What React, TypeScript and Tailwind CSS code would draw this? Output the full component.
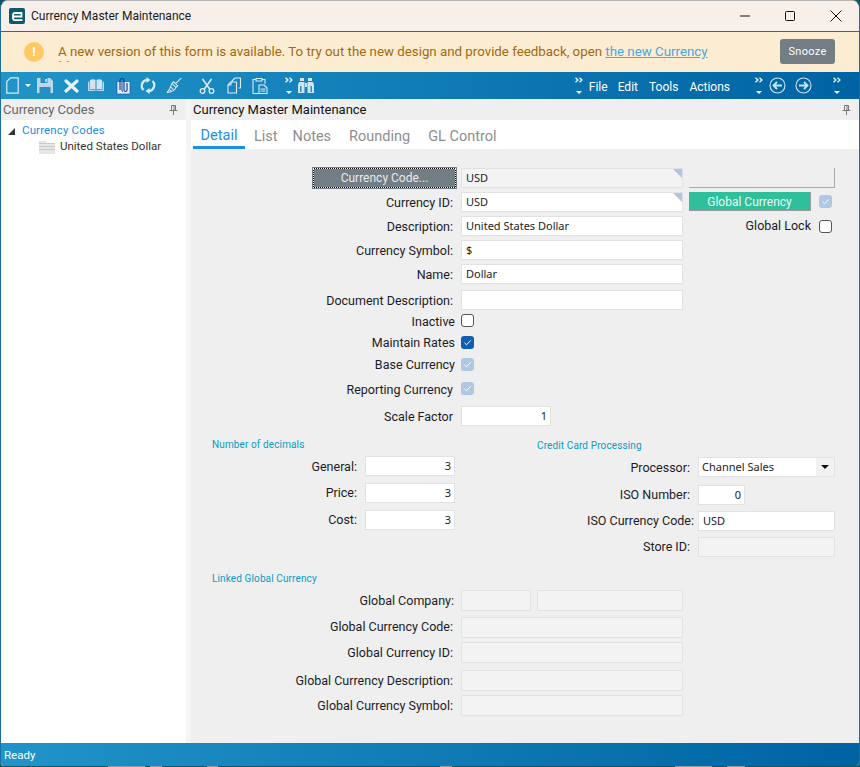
import React from "react";

const grad = "bg-gradient-to-r from-[#2094c8] to-[#0063a3]";

function Field({ w = "w-[222px]", h = "h-[20px]", v = "", right = false, disabled = false, corner = false, children }: { w?: string; h?: string; v?: string; right?: boolean; disabled?: boolean; corner?: boolean; children?: React.ReactNode }) {
  return (
    <div className={`relative ${w} ${h} shrink-0 border border-[#e2e2e2] ${disabled ? "bg-[#f3f3f3]" : "bg-white"} flex items-center pl-1 text-[11px] text-[#222] font-['Noto_Sans',sans-serif] ${right ? "justify-end pr-[3px]" : ""}`}>
      {v}
      {children}
      {corner && <span className="absolute top-0 right-0 w-0 h-0 border-t-[9px] border-l-[9px] border-t-[#b0c6e0] border-l-transparent" />}
    </div>
  );
}

function Check({ state }: { state: "off" | "on" | "dis" }) {
  if (state === "off") return <span className="block w-[13px] h-[13px] rounded-[3px] border border-[#555] bg-white shrink-0" />;
  return (
    <span className={`flex items-center justify-center w-[13px] h-[13px] shrink-0 rounded-[3px] ${state === "on" ? "bg-[#0f5fb5]" : "bg-[#b0c8e4]"}`}>
      <svg width="9" height="9" viewBox="0 0 9 9" fill="none" stroke="#fff" strokeWidth="1"><path d="M1.500 4.800 3.600 6.800 7.600 2.400" /></svg>
    </span>
  );
}

function Row({ label, mt = "", children, lw = "w-[262px]", h = "h-[20px]", gap = "w-2", lp = "" }: { label: string; mt?: string; children: React.ReactNode; lw?: string; h?: string; gap?: string; lp?: string }) {
  return (
    <div className={`flex items-center ${h} ${mt}`}>
      <span className={`${lw} ${lp} shrink-0 text-right text-[12.5px] text-[#1c1c28] whitespace-nowrap`}>{label}</span>
      <span className={`${gap} shrink-0`} />
      {children}
    </div>
  );
}

function Pin() {
  return (
    <svg width="9" height="10" viewBox="0 0 9 10" fill="none" stroke="#777" strokeWidth="1">
      <path d="M2.500 .5h4v5h-4zM.5 5.500h8M4.500 5.500v4.500M5 1v4" />
    </svg>
  );
}

function Chevrons({ className = "" }: { className?: string }) {
  return (
    <span className={`flex flex-col items-center justify-between h-[17px] w-2.5 shrink-0 ${className}`}>
      <svg width="8" height="6" viewBox="0 0 8 6" fill="none" stroke="#fff" strokeWidth="1.200"><path d="M.5 .7 3 3 .5 5.300M4.500 .7 7 3 4.500 5.300" /></svg>
      <svg width="6" height="3" viewBox="0 0 6 3" fill="#fff"><path d="M0 0h6L3 3z" /></svg>
    </span>
  );
}

function Tool({ children, w = "w-4", mr = "mr-[10px]" }: { children: React.ReactNode; w?: string; mr?: string }) {
  return <span className={`${w} ${mr} h-5 flex items-center justify-center shrink-0`}>{children}</span>;
}

const ic = { fill: "none", stroke: "#dcebf4", strokeWidth: 1.200, strokeLinejoin: "round" as const, strokeLinecap: "round" as const };

function Toolbar() {
  return (
    <div className={`h-[27px] shrink-0 flex items-center ${grad} text-white text-[12px]`}>
      <div className="flex items-center pl-[4px]">
        <Tool w="w-3.5" mr="mr-1.5">
          <svg width="13" height="17" viewBox="0 0 13 17" {...ic}><path d="M4.500 .8h7.700v15.400H.8V4.500z" /></svg>
        </Tool>
        <svg width="6" height="3" viewBox="0 0 6 3" fill="#fff" className="mr-[6px]"><path d="M0 0h6L3 3z" /></svg>
        <Tool mr="mr-[10px]">
          <svg width="16" height="15" viewBox="0 0 16 15"><path fill="#b9d8ea" d="M0 0h13l3 3v12H0z" /><path fill="#2b8ec2" d="M3.500 0h7v5h-7zM2.500 9h11v6h-11z" /><path fill="#b9d8ea" d="M8 1h2v3H8z" /></svg>
        </Tool>
        <Tool mr="mr-[9px]">
          <svg width="15" height="14" viewBox="0 0 15 14" stroke="#e8f2f8" strokeWidth="3.200" strokeLinecap="round"><path d="M2 2l11 10M13 2 2 12" /></svg>
        </Tool>
        <Tool mr="mr-[11px]">
          <svg width="16" height="13" viewBox="0 0 16 13"><path fill="#b9d8ea" d="M0 3 1.500 2v9h6v1H0zM16 3l-1.500-1v9h-6v1H16z" /><path fill="#cfe4f1" d="M2 1c2-1 4-1 5.500 0v9.500C6 10 4 10 2 10.500zM14 1c-2-1-4-1-5.500 0v9.500C10 10 12 10 14 10.500z" /></svg>
        </Tool>
        <Tool mr="mr-[9px]">
          <svg width="15" height="18" viewBox="0 0 15 18"><path fill="#dfeef8" stroke="#1b3fa0" strokeWidth=".6" d="M1 4.500h13v12.500H1z" /><path fill="none" stroke="#1b3fa0" strokeWidth="1.200" d="M4 13V3.500a2 2 0 0 1 4 0V13a1.500 1.500 0 0 0 3 0V6" /><path fill="none" stroke="#1b3fa0" strokeWidth="1" d="M6 5v8.500a1 1 0 0 0 1 1" /></svg>
        </Tool>
        <Tool mr="mr-[10px]">
          <svg width="16" height="17" viewBox="0 0 16 17" fill="none" stroke="#dcebf4" strokeWidth="2.200"><path d="M3.500 13A6 6 0 0 1 7 2.800M12.500 4a6 6 0 0 1-3.500 10.200" /><path fill="#dcebf4" stroke="none" d="M6.500 0v6L10.500 3zM9.500 17v-6L5.500 14z" /></svg>
        </Tool>
        <Tool mr="mr-[17px]">
          <svg width="17" height="17" viewBox="0 0 17 17" {...ic} strokeWidth={1.100}><path d="M16 1 10 6.500M8 4.500l4.500 4.500-1.500 1c-1.500 3-5 5.500-10 6C3 14 5 10 6.500 6zM5 10l2.500 2.500M3.500 13l1.500 1M7 7l3 3" /></svg>
        </Tool>
        <Tool mr="mr-[11px]">
          <svg width="16" height="16" viewBox="0 0 16 16" fill="none" stroke="#dcebf4" strokeWidth="1.300"><circle cx="3.500" cy="13" r="2.300" /><circle cx="12.500" cy="13" r="2.300" /><path d="M5 11.500 12.500 1M11 11.500 3.500 1" strokeWidth="1.600" /></svg>
        </Tool>
        <Tool mr="mr-[10px]">
          <svg width="15" height="17" viewBox="0 0 15 17" {...ic} strokeWidth={1.100}><path d="M5 4 8 1h5.500v10H12M4 5h5.500v11H1V8z" /><path d="M4 5v3H1" /></svg>
        </Tool>
        <Tool mr="mr-4">
          <svg width="16" height="17" viewBox="0 0 16 17" {...ic} strokeWidth={1.100}><path d="M4 2.500H1v14h6M10 2.500h3v4M4 1.500h6v2.500H4zM7 8h5l3 3v5.500H7z" /><path d="M9 12h4M9 14h4" /></svg>
        </Tool>
        <Chevrons className="mr-1" />
        <Tool mr="mr-0">
          <svg width="16" height="15" viewBox="0 0 16 15"><path fill="#cfe4f1" d="M2 0h4v3H2zM10 0h4v3h-4zM1 4h5.500v11H0V7zM15 4H9.500v11H16V7zM7 5h2v4H7z" /><path fill="#2b8ec2" d="M2 8h1.500v6H2zM12.500 8H14v6h-1.500z" /></svg>
        </Tool>
      </div>
      <div className="flex-1" />
      <Chevrons className="mr-[5px]" />
      <span className="mr-[10px] pt-[2px]">File</span>
      <span className="mr-[11px] pt-[2px]">Edit</span>
      <span className="mr-[11px] pt-[2px]">Tools</span>
      <span className="mr-[24px] pt-[2px]">Actions</span>
      <Chevrons className="mr-[5px]" />
      <svg width="17" height="17" viewBox="0 0 17 17" fill="none" stroke="#cfe4f1" strokeWidth="1.100" className="mr-[9px]"><circle cx="8.500" cy="8.500" r="7.500" /><path d="M13 8.500H4.500M8 5 4.500 8.500 8 12" strokeWidth="1.800" /></svg>
      <svg width="17" height="17" viewBox="0 0 17 17" fill="none" stroke="#cfe4f1" strokeWidth="1.100" className="mr-5"><circle cx="8.500" cy="8.500" r="7.500" /><path d="M4 8.500h8.500M9 5l3.500 3.500L9 12" strokeWidth="1.800" /></svg>
      <Chevrons className="mr-[17px]" />
    </div>
  );
}

function Heading({ children, mt = "", ml = "" }: { children: React.ReactNode; mt?: string; ml?: string }) {
  return <div className={`${ml} ${mt} h-[14px] pt-px text-[10px] leading-[14px] tracking-[.12px] text-[#0a9bc4]`}>{children}</div>;
}

function Form() {
  return (
    <div className="flex-1 min-h-0 bg-[#efefef] pt-[19px]">
      <div className="flex">
        <div className="w-[492px] shrink-0">
          <div className="flex items-center h-[20px]">
            <span className="ml-[121px] w-[145px] h-[22px] shrink-0 p-px bg-[#737d84]">
              <span className="block w-full h-full border border-dotted border-white bg-black">
                <span className="flex w-full h-full items-center justify-center bg-[#737d84] text-[#e8eaec] text-[12px]">Currency Code...</span>
              </span>
            </span>
            <span className="w-1 shrink-0" />
            <Field disabled corner v="USD" />
          </div>
          <Row label="Currency ID:" mt="mt-1" lp="pt-[2px]"><Field corner v="USD" /></Row>
          <Row label="Description:" mt="mt-1" lp="pt-[2px]"><Field v="United States Dollar" /></Row>
          <Row label="Currency Symbol:" mt="mt-1" lp="pt-[2px]"><Field v="$" /></Row>
          <Row label="Name:" mt="mt-1" lp="pt-[2px]"><Field v="Dollar" /></Row>
          <Row label="Document Description:" mt="mt-1.5" lp="pt-[2px]"><Field /></Row>
          <Row label="Inactive" lw="w-[264px]" gap="w-1.5" lp="pt-[5px]"><Check state="off" /></Row>
          <Row label="Maintain Rates" mt="mt-0.5" lw="w-[264px]" gap="w-1.5" lp="pt-[2px]"><Check state="on" /></Row>
          <Row label="Base Currency" mt="mt-0.5" lw="w-[264px]" gap="w-1.5" lp="pt-[2px]"><Check state="dis" /></Row>
          <Row label="Reporting Currency" mt="mt-1" lp="pt-[5px]"><Check state="dis" /></Row>
          <Row label="Scale Factor" mt="mt-2" lp="pt-[2px]"><Field w="w-[90px]" right v="1" /></Row>
        </div>
        <div className="ml-[6px] w-[146px] shrink-0">
          <div className="h-[20px] border-r border-b border-[#aaa]" />
          <div className="mt-1 flex items-center">
            <span className="w-[122px] h-[19px] pt-px shrink-0 flex items-center justify-center bg-[#2fbf9b] border-r border-b border-[#9a9a9a] text-[#eafaf6] text-[12px]">Global Currency</span>
            <span className="ml-2"><Check state="dis" /></span>
          </div>
          <div className="mt-[5px] flex items-center h-[20px] justify-end pr-[3px]">
            <span className="text-[12.5px] text-[#1c1c28] mr-2 pt-px">Global Lock</span>
            <Check state="off" />
          </div>
        </div>
      </div>

      <div className="flex mt-[11px]">
        <div className="w-[346px] shrink-0">
          <Heading ml="ml-[21px]">Number of decimals</Heading>
          <Row label="General:" lw="w-[166px]" mt="mt-[5px]" lp="pt-[2px]"><Field w="w-[90px]" right v="3" /></Row>
          <Row label="Price:" lw="w-[166px]" mt="mt-[7px]"><Field w="w-[90px]" right v="3" /></Row>
          <Row label="Cost:" lw="w-[166px]" mt="mt-[7px]"><Field w="w-[90px]" right v="3" /></Row>
        </div>
        <div className="flex-1 pt-px">
          <Heading>Credit Card Processing</Heading>
          <Row label="Processor:" lw="w-[153px]" mt="mt-[5px]" lp="pt-[2px]">
            <Field w="w-[137px]">
              <span className="flex-1 -ml-px">Channel Sales</span>
              <span className="w-[18px] h-full flex items-center justify-center bg-[#f2f2f2]">
                <svg width="8" height="4" viewBox="0 0 8 4" fill="#111"><path d="M0 0h8L4 4z" /></svg>
              </span>
            </Field>
          </Row>
          <Row label="ISO Number:" lw="w-[153px]" mt="mt-2"><Field w="w-[47px]" right v="0" /></Row>
          <Row label="ISO Currency Code:" lw="w-[157px]" gap="w-1" mt="mt-[6px]"><Field w="w-[137px]" v="USD" /></Row>
          <Row label="Store ID:" lw="w-[153px]" mt="mt-[6px]"><Field w="w-[137px]" disabled /></Row>
        </div>
      </div>

      <Heading ml="ml-[21px]" mt="mt-[14px]">Linked Global Currency</Heading>
      <Row label="Global Company:" lw="w-[263px]" gap="w-[7px]" h="h-[21px]" mt="mt-[5px]" lp="pt-[2px]">
        <Field w="w-[70px]" h="h-[21px]" disabled />
        <span className="w-1.5 shrink-0" />
        <Field w="w-[146px]" h="h-[21px]" disabled />
      </Row>
      <Row label="Global Currency Code:" h="h-[21px]" mt="mt-[6px]"><Field h="h-[21px]" disabled /></Row>
      <Row label="Global Currency ID:" h="h-[21px]" mt="mt-1" lp="pt-[2px]"><Field h="h-[21px]" disabled /></Row>
      <Row label="Global Currency Description:" h="h-[21px]" mt="mt-[7px]" lp="pt-[2px]"><Field h="h-[21px]" disabled /></Row>
      <Row label="Global Currency Symbol:" h="h-[21px]" mt="mt-1" lp="pt-[2px]"><Field h="h-[21px]" disabled /></Row>
    </div>
  );
}

export default function App() {
  return (
    <div className="w-[860px] h-[767px] bg-[#14535f] overflow-hidden font-['Roboto','Liberation_Sans',sans-serif]">
      <div className="w-full h-[766px] flex flex-col overflow-hidden rounded-t-[8px] rounded-b-[4px] border-x border-t border-x-[#1b6f9e] border-t-[#b5b5b5] bg-white">
        <div className="h-[31px] shrink-0 bg-[#f7f0ea] flex items-center border-b border-[#1572a6]">
          <span className="ml-[8px] w-4 h-4 rounded-[2px] bg-[#0d5a6e] flex items-center justify-center">
            <svg width="12" height="11" viewBox="0 0 12 11" fill="none" stroke="#fff" strokeWidth="1.800"><path d="M2.500 5.500H10.500V2H4Q2 2 2 4V7Q2 9.200 4 9.200H11.500" /></svg>
          </span>
          <span className="ml-[6px] text-[12px] text-[#1a1a1a]">Currency Master Maintenance</span>
          <div className="flex-1" />
          <svg width="11" height="2" viewBox="0 0 11 2" className="mr-[34px]"><path d="M0 1h10" stroke="#111" /></svg>
          <svg width="10" height="10" viewBox="0 0 10 10" className="mr-[35px]" fill="none" stroke="#111"><rect x=".5" y=".5" width="9" height="9" rx="1" /></svg>
          <svg width="12" height="12" viewBox="0 0 12 12" className="mr-[17px]" stroke="#111"><path d="M.5 .5 11.500 11.500M11.500 .5 .5 11.500" /></svg>
        </div>
        <div className="h-[40px] shrink-0 bg-[#fcecd2] flex items-start">
          <span className="ml-[23px] mt-[10px] w-5 h-5 shrink-0 rounded-full bg-[#ffc964] flex items-center justify-center text-white text-[13px] font-bold">!</span>
          <div className="ml-[14px] mt-[13px] w-[690px] h-[17px] overflow-hidden text-[13.3px] leading-[14px] text-[#a06a0e]">
            A new version of this form is available. To try out the new design and provide feedback, open <span className="text-[#4aa7e2] underline">the new Currency Master</span>
          </div>
          <span className="ml-[32px] mt-[7px] pt-[2px] w-[55px] h-[25px] shrink-0 rounded-[3px] bg-[#737d84] flex items-center justify-center text-white text-[11px] tracking-[.3px]">Snooze</span>
        </div>
        <Toolbar />
        <div className="flex-1 flex min-h-0 bg-[#f5f5f5]">
          <div className="w-[185px] shrink-0 flex flex-col bg-white">
            <div className="h-[21px] bg-[#efefef] flex items-center justify-between pl-[2px] pr-2 text-[13px] text-[#666]">
              Currency Codes
              <Pin />
            </div>
            <div className="pt-[3px] text-[11.5px]">
              <div className="flex items-center h-[16px]">
                <svg width="7" height="7" viewBox="0 0 7 7" className="ml-[7px] mr-[7px]"><path d="M7 0v7H0z" fill="#333" /></svg>
                <span className="text-[#1a8fe3] tracking-[.15px]">Currency Codes</span>
              </div>
              <div className="flex items-center h-[16px] text-[#333]">
                <svg width="16" height="14" viewBox="0 0 16 14" className="ml-[38px] mr-[5px]"><path fill="#e6e6e6" d="M0 1h7l1 2h8v11H0z" /><path stroke="#c9c9c9" d="M0 3.500h16M0 6.500h16M0 9.500h16" /></svg>
                <span>United States Dollar</span>
              </div>
            </div>
          </div>
          <div className="flex-1 ml-[5px] flex flex-col min-w-0">
            <div className="h-[21px] shrink-0 bg-[#efefef] flex items-center justify-between pl-[2px] pr-2 text-[13px] text-[#111]">
              Currency Master Maintenance
              <Pin />
            </div>
            <div className="h-[29px] shrink-0 bg-white flex items-end pl-[2px] text-[14.5px] text-[#8e8e8e]">
              <span className="h-[29px] w-[52px] flex items-center justify-center pt-[6px] border-b-[3px] border-[#1a8fe3] text-[#1a8fe3]">Detail</span>
              <span className="h-[29px] ml-[9px] flex items-center pt-[5px]">List</span>
              <span className="h-[29px] ml-[15px] flex items-center pt-[5px]">Notes</span>
              <span className="h-[29px] ml-[18px] flex items-center pt-[5px]">Rounding</span>
              <span className="h-[29px] ml-[18px] flex items-center pt-[5px]">GL Control</span>
            </div>
            <Form />
          </div>
        </div>
        <div className={`h-[23px] shrink-0 ${grad} flex items-center pl-[3px] pt-[3px] text-[11.5px] text-white`}>Ready</div>
      </div>
      <div className="flex h-px">
        <span className="ml-[108px] w-[37px] bg-[#9a9a9a]" />
        <span className="ml-[5px] w-[12px] bg-[#9a9a9a]" />
        <span className="ml-[45px] w-[11px] bg-[#9a9a9a]" />
        <span className="ml-[222px] w-[12px] bg-[#9a9a9a]" />
        <span className="ml-[223px] w-[37px] bg-[#9a9a9a]" />
        <span className="ml-[15px] w-[18px] bg-[#9a9a9a]" />
      </div>
    </div>
  );
}
